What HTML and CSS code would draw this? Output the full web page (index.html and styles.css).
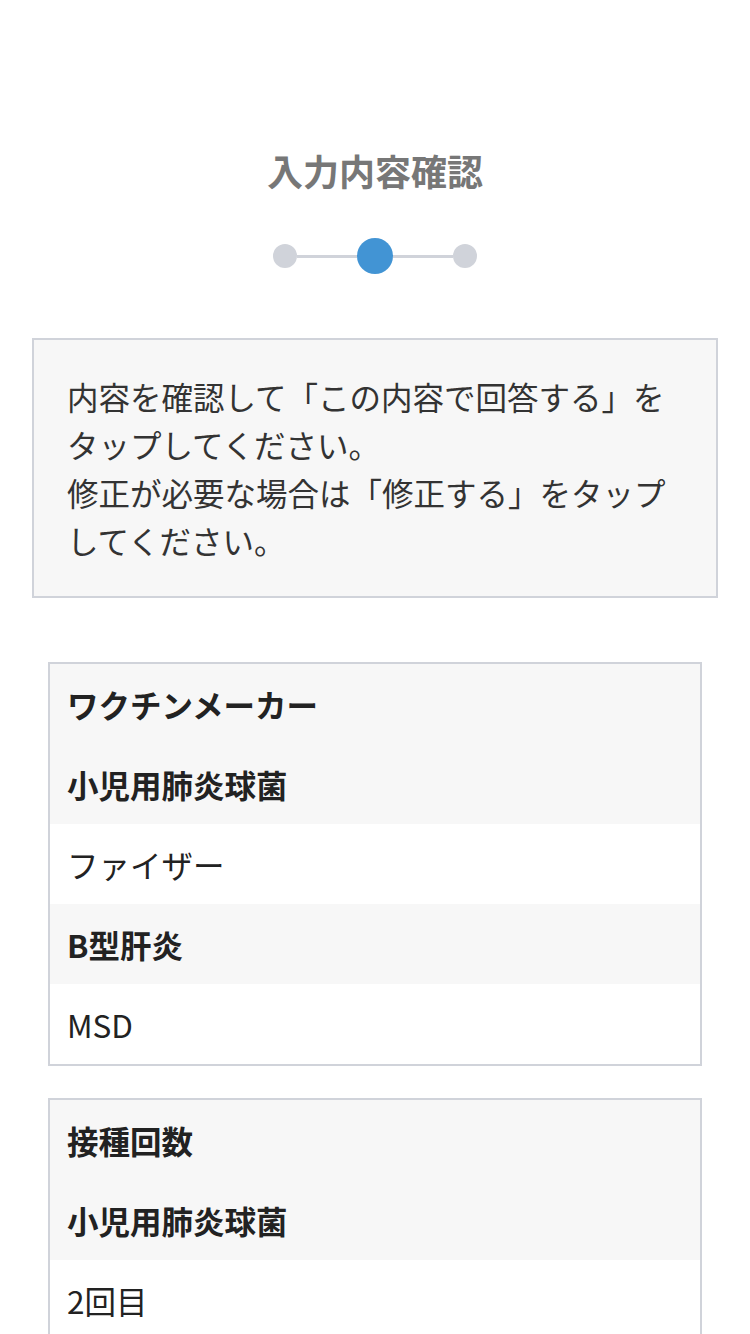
FILE: index.html
```html
<!DOCTYPE html>
<html lang="ja">
<head>
    <meta charset="UTF-8">
    <meta name="viewport" content="width=device-width, initial-scale=1.0">
    <title>入力内容確認</title>
    <link rel="stylesheet" href="styles.css">
</head>
<body>
    <header class="page-head">
        <h1 class="page-title">入力内容確認</h1>
        <div class="stepper">
            <span class="step-dot"></span>
            <span class="step-line"></span>
            <span class="step-dot active"></span>
            <span class="step-line"></span>
            <span class="step-dot"></span>
        </div>
    </header>

    <main>
        <div class="notice">
            <p>内容を確認して「この内容で回答する」をタップしてください。</p>
            <p>修正が必要な場合は「修正する」をタップしてください。</p>
        </div>

        <section class="answer-card">
            <div class="label-row">ワクチンメーカー</div>
            <div class="label-row">小児用肺炎球菌</div>
            <div class="value-row">ファイザー</div>
            <div class="label-row">B型肝炎</div>
            <div class="value-row">MSD</div>
        </section>

        <section class="answer-card">
            <div class="label-row">接種回数</div>
            <div class="label-row">小児用肺炎球菌</div>
            <div class="value-row">2回目</div>
        </section>
    </main>
</body>
</html>
```

FILE: styles.css
```css
body {
    font-family: "Noto Sans CJK JP", "Noto Sans", sans-serif;
    color: #333;
    background: #fff;
    margin: 0;
}
.page-head {
    padding-top: 143px;
    display: flex;
    flex-direction: column;
    align-items: center;
}
.page-title {
    margin: 0;
    font-size: 36px;
    line-height: 54px;
    font-weight: bold;
    color: #777;
}
.stepper {
    display: flex;
    align-items: center;
    margin-top: 41px;
    height: 36px;
}
.step-dot {
    width: 24px;
    height: 24px;
    border-radius: 50%;
    background: #d0d3da;
}
.step-dot.active {
    width: 36px;
    height: 36px;
    background: #4294d4;
}
.step-line {
    width: 60px;
    height: 3px;
    background: #d0d3da;
}
main {
    padding: 64px 32px 0;
}
.notice {
    background: #f7f7f7;
    border: 2px solid #d0d3da;
    padding: 32px 33px 32px;
    margin-bottom: 64px;
}
.notice p {
    margin: 0;
    font-size: 31.5px;
    line-height: 48px;
}
.answer-card {
    margin: 0 16px 32px;
    border: 2px solid #d0d3da;
}
.label-row, .value-row {
    height: 80px;
    display: flex;
    align-items: center;
    padding: 0 17px;
    font-size: 31.5px;
    color: #222;
}
.label-row {
    background: #f7f7f7;
    font-weight: bold;
}
.value-row {
    background: #fff;
}
```
